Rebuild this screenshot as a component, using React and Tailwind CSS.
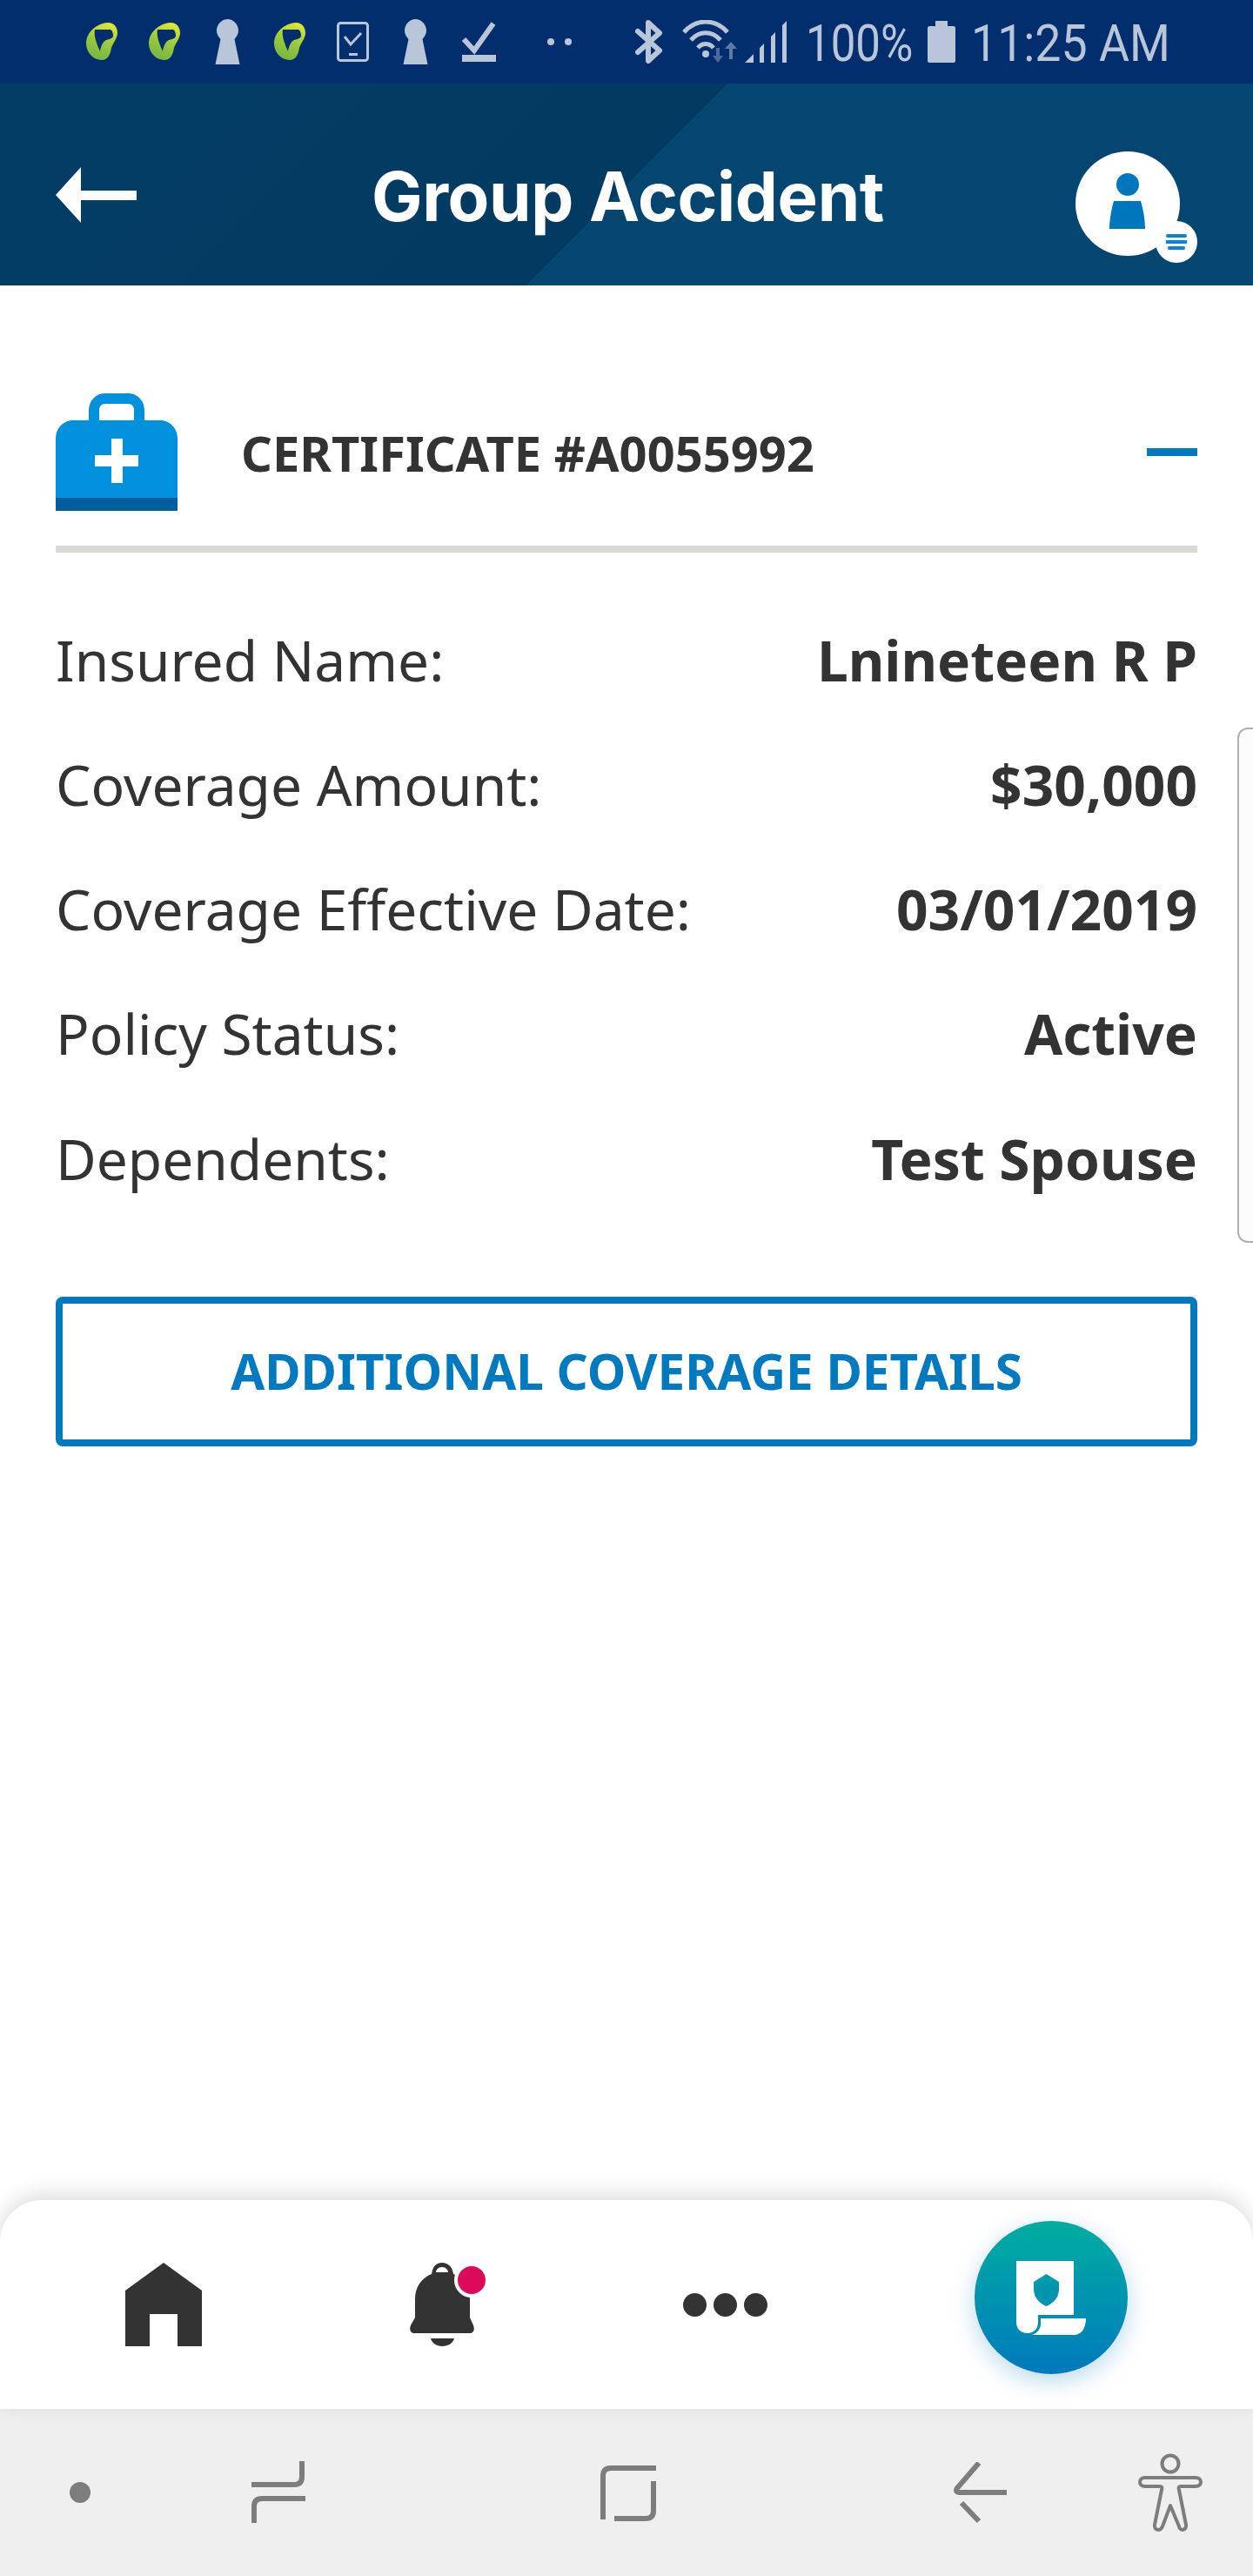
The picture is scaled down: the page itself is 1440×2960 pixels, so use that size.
import React from "react";

const statusText = "text-[#b9c5d8] font-['Roboto',sans-serif] font-normal text-[60px] leading-none origin-left translate-y-[2px]";

function Blob({ id }) {
  return (
    <svg width="36" height="44" viewBox="0 0 36 44" className="shrink-0">
      <defs>
        <linearGradient id={id} x1="0.7" y1="0" x2="0.4" y2="1">
          <stop offset="0" stopColor="#dfe635" />
          <stop offset="0.5" stopColor="#9ccb3b" />
          <stop offset="1" stopColor="#76b546" />
        </linearGradient>
      </defs>
      <path
        fillRule="evenodd"
        fill={"url(#" + id + ")"}
        d="M25 0C32 0 36 5 36 12C36 18 31 23 29 29C28 36 25 43 18 43C8 43 0 34 0 24C0 11 12 1 25 0ZM10 8C9 13 10 20 16 33C17 27 19 22 23 20C27 19 31 18 31 15C31 12 30 9 28 8Z"
      />
    </svg>
  );
}

function Keyhole() {
  return (
    <svg width="29" height="52" viewBox="0 0 29 52" className="shrink-0">
      <path fill="#b9c5d8" d="M14.500 0C21 0 27 6 27 13C27 18 24 21 22.500 23L28.500 52L0.500 52L6.500 23C5 21 2 18 2 13C2 6 8 0 14.500 0Z" />
    </svg>
  );
}

function StatusBar() {
  return (
    <div className="h-[96px] bg-[#032e6e] flex items-center shrink-0 pl-[99px]">
      <Blob id="blobA" />
      <div className="ml-[36px]"><Blob id="blobB" /></div>
      <div className="ml-[40px]"><Keyhole /></div>
      <div className="ml-[39px]"><Blob id="blobC" /></div>
      <svg width="37" height="46" viewBox="0 0 37 46" className="ml-[36px] shrink-0">
        <rect x="1.500" y="1.500" width="34" height="43" rx="3" fill="none" stroke="#b9c5d8" strokeWidth="3" />
        <path d="M9 17L16 26L28 13" fill="none" stroke="#b9c5d8" strokeWidth="3" />
        <rect x="14" y="36" width="10" height="3" fill="#b9c5d8" />
      </svg>
      <div className="ml-[39px]"><Keyhole /></div>
      <svg width="39" height="46" viewBox="0 0 39 46" className="ml-[39px] shrink-0">
        <path d="M2 20L14 33L36 2" fill="none" stroke="#b9c5d8" strokeWidth="6" />
        <rect x="0" y="38" width="39" height="8" fill="#b9c5d8" />
      </svg>
      <div className="ml-[59px] flex gap-[12px] shrink-0">
        <div className="w-[8px] h-[8px] rounded-full bg-[#b9c5d8]" />
        <div className="w-[8px] h-[8px] rounded-full bg-[#b9c5d8]" />
      </div>
      <svg width="32" height="50" viewBox="0 0 32 50" className="ml-[73px] shrink-0">
        <path d="M3 13L28 35L15 47V3L28 15L3 37" fill="none" stroke="#b9c5d8" strokeWidth="6" strokeLinejoin="round" strokeLinecap="round" />
      </svg>
      <svg width="66" height="50" viewBox="0 0 66 50" className="ml-[21px] shrink-0">
        <path d="M3 14C17 -2 39 -2 53 14" fill="none" stroke="#b9c5d8" strokeWidth="5" />
        <path d="M11 23C21 12 35 12 45 23" fill="none" stroke="#b9c5d8" strokeWidth="5" />
        <path d="M19 32C24 26 32 26 37 32" fill="none" stroke="#b9c5d8" strokeWidth="5" />
        <circle cx="28" cy="39" r="4" fill="#b9c5d8" />
        <path d="M42 32V44" fill="none" stroke="#4d6a9c" strokeWidth="4" />
        <path d="M36 41H48L42 49Z" fill="#4d6a9c" />
        <path d="M57 45V30" fill="none" stroke="#5f7aa6" strokeWidth="4" />
        <path d="M50 33H64L57 25Z" fill="#5f7aa6" />
      </svg>
      <svg width="48" height="48" viewBox="0 0 48 48" className="ml-[7px] shrink-0">
        <path fill="#b9c5d8" d="M0 48L10 38V48ZM17 31L22 26V48H17ZM30 18L35 13V48H30ZM43 5L48 0V48H43Z" />
      </svg>
      <div className="ml-[22px] w-[122px] shrink-0">
        <span className={statusText + " inline-block scale-x-[0.85] whitespace-nowrap"}>100%</span>
      </div>
      <svg width="32" height="48" viewBox="0 0 32 48" className="ml-[18px] shrink-0">
        <path fill="#b9c5d8" d="M9 0H23V6H30C31 6 32 7 32 8V46C32 47 31 48 30 48H2C1 48 0 47 0 46V8C0 7 1 6 2 6H9Z" />
      </svg>
      <div className="ml-[18px] w-[223px] shrink-0">
        <span className={statusText + " inline-block scale-x-[0.895] whitespace-nowrap"}>11:25 AM</span>
      </div>
    </div>
  );
}

function Header() {
  return (
    <div className="h-[232px] shrink-0 flex items-center pt-[24px] pl-[64px] bg-[linear-gradient(135deg,#033d66_0%,#033a61_50%,#04466f_50%,#04466f_100%)]">
      <svg width="93" height="64" viewBox="0 0 93 64" className="shrink-0">
        <path fill="#fff" d="M29 0V27H93V38H29V64L0 32Z" />
      </svg>
      <div className="ml-[270px] mt-[4px] text-white font-['Inter',sans-serif] font-bold text-[78px] tracking-[-0.400px] leading-none whitespace-nowrap">
        Group Accident
      </div>
      <div className="relative ml-auto mr-[84px] self-end mb-[34px] w-[120px] h-[120px] rounded-full bg-white shrink-0 flex flex-col items-center pt-[25px]">
        <div className="w-[26px] h-[26px] rounded-full bg-[#0076bd]" />
        <svg width="42" height="32" viewBox="0 0 42 32" className="mt-[6px]">
          <path fill="#0076bd" d="M5 0H36C39 10 41 22 41 32H0C0 22 2 10 5 0Z" />
        </svg>
        <div className="absolute left-[92px] top-[80px] w-[48px] h-[48px] rounded-full bg-white flex flex-col items-center justify-center gap-[3px]">
          <div className="w-[24px] h-[4px] bg-[#0a84cc] rounded-[2px]" />
          <div className="w-[24px] h-[4px] bg-[#0a84cc]" />
          <div className="w-[20px] h-[4px] bg-[#0a84cc] rounded-[2px]" />
        </div>
      </div>
    </div>
  );
}

function Row({ label, value }) {
  return (
    <div className="h-[143.250px] flex items-center justify-between font-['Noto_Sans',sans-serif] text-[#333333] text-[64px] leading-none">
      <span>{label}</span>
      <span className="font-bold">{value}</span>
    </div>
  );
}

function Certificate() {
  return (
    <div className="flex-1 px-[64px]">
      <div className="flex items-center pt-[124px] pb-[40px] border-b-[8px] border-[#d8d8d4]">
        <svg width="140" height="135" viewBox="0 0 140 135" className="shrink-0">
          <path fill="none" stroke="#0090dc" strokeWidth="12" d="M44 36V20C44 11 50 6 57 6H83C90 6 96 11 96 20V36" />
          <path fill="#0090dc" d="M20 31H120C132 31 140 41 140 52V120H0V52C0 41 8 31 20 31Z" />
          <path fill="#005e9f" d="M0 120H140V135H0Z" />
          <path fill="#fff" d="M64 52H77V71H95V84H77V103H64V84H45V71H64Z" />
        </svg>
        <div className="ml-[73px] flex-1 font-['Noto_Sans',sans-serif] font-bold text-[#333333] text-[56px] leading-none whitespace-nowrap">
          CERTIFICATE #A0055992
        </div>
        <div className="w-[58px] h-[9px] bg-[#0078be] shrink-0" />
      </div>
      <div className="mt-[52px]">
        <Row label="Insured Name:" value="Lnineteen R P" />
        <Row label="Coverage Amount:" value="$30,000" />
        <Row label="Coverage Effective Date:" value="03/01/2019" />
        <Row label="Policy Status:" value="Active" />
        <Row label="Dependents:" value="Test Spouse" />
      </div>
      <button
        type="button"
        className="mt-[87px] w-full h-[172px] border-[8px] border-[#0079bf] rounded-[8px] bg-white text-[#0079bf] font-['Noto_Sans',sans-serif] font-bold text-[56.500px] leading-none"
      >
        ADDITIONAL COVERAGE DETAILS
      </button>
    </div>
  );
}

function BottomTabs() {
  return (
    <div className="relative h-[240px] shrink-0 rounded-t-[48px] bg-white shadow-[0_-6px_24px_rgba(0,0,0,0.14)] flex items-center pl-[144px]">
      <svg width="88" height="96" viewBox="0 0 88 96" className="shrink-0">
        <path fill="#333333" d="M44 0L88 32V96H60V59H28V96H0V32Z" />
      </svg>
      <div className="relative ml-[239px] shrink-0 w-[74px] h-[96px]">
        <svg width="74" height="96" viewBox="0 0 74 96">
          <path
            fill="#333333"
            fillRule="evenodd"
            d="M37 0C44 0 49 5 50 13C62 17 69 28 69 42V63L73 72C75 77 73 81 69 81H5C1 81 -1 77 1 72L6 63V42C6 28 13 18 25 13C26 5 30 0 37 0ZM37 5C33 5 30 8 30 11H44C44 8 41 5 37 5Z"
          />
          <path fill="#333333" d="M24 87H51C50 92 44 96 37 96C31 96 25 92 24 87Z" />
        </svg>
        <div className="absolute left-[51px] top-0 w-[32px] h-[32px] rounded-full bg-[#dc0a5a] border-[4px] border-white box-content" />
      </div>
      <div className="ml-[240px] flex gap-[8px] shrink-0">
        <div className="w-[27px] h-[27px] rounded-full bg-[#333333]" />
        <div className="w-[27px] h-[27px] rounded-full bg-[#333333]" />
        <div className="w-[27px] h-[27px] rounded-full bg-[#333333]" />
      </div>
      <div className="ml-[238px] -mt-[16px] w-[176px] h-[176px] rounded-full shrink-0 bg-gradient-to-b from-[#04ad9f] to-[#0079bc] shadow-[0_8px_28px_rgba(0,121,188,0.28)] flex items-center justify-center">
        <svg width="80" height="85" viewBox="0 0 80 85">
          <path
            fill="#fff"
            fillRule="evenodd"
            d="M0 0H66V62H25V70C25 78 20 83 13 83C5 83 0 78 0 70ZM34.500 15L20 24V33C20 42 27 49 34.500 52C42 49 49 42 49 33V24Z"
          />
          <path fill="#fff" d="M28 66H80C80 77 75 85 66 85H18C24 83 28 78 28 72Z" />
        </svg>
      </div>
    </div>
  );
}

function SystemNav() {
  return (
    <div className="h-[192px] shrink-0 bg-[#efefef] flex items-center pl-[80px]">
      <div className="w-[24px] h-[24px] rounded-full bg-[#7d7d7d] shrink-0" />
      <svg width="62" height="72" viewBox="0 0 62 72" className="ml-[185px] shrink-0">
        <path fill="none" stroke="#7d7d7d" strokeWidth="6" d="M58 0V18C58 24 55 27 49 27H0" />
        <path fill="none" stroke="#7d7d7d" strokeWidth="6" d="M62 43H12C6 43 3 46 3 52V71" />
      </svg>
      <svg width="64" height="66" viewBox="0 0 64 66" className="ml-[339px] shrink-0">
        <path fill="none" stroke="#7d7d7d" strokeWidth="6" d="M3 64V14C3 8 6 5 12 5H64" />
        <path fill="none" stroke="#7d7d7d" strokeWidth="6" d="M61 20V54C61 60 58 63 52 63H16" />
      </svg>
      <svg width="62" height="70" viewBox="0 0 62 70" className="ml-[341px] shrink-0">
        <path fill="none" stroke="#7d7d7d" strokeWidth="6" d="M62 35H8C4 35 3 33 5 30L30 1" />
        <path fill="none" stroke="#7d7d7d" strokeWidth="6" d="M10 47L30 68" />
      </svg>
      <svg width="74" height="90" viewBox="0 0 74 90" className="ml-[151px] shrink-0">
        <circle cx="37" cy="12" r="9.500" fill="none" stroke="#7d7d7d" strokeWidth="4" />
        <path
          fill="none"
          stroke="#7d7d7d"
          strokeWidth="4"
          strokeLinejoin="round"
          d="M8 28H66C74 28 74 38 66 38H49C47 38 46 39 47 42L55 82C56 89 48 90 47 84L37 60L28 84C26 90 18 89 19 82L27 42C28 39 27 38 25 38H8C0 38 0 28 8 28Z"
        />
      </svg>
    </div>
  );
}

export default function App() {
  return (
    <div className="relative w-[1440px] h-[2960px] bg-white flex flex-col overflow-hidden">
      <StatusBar />
      <Header />
      <Certificate />
      <BottomTabs />
      <SystemNav />
      {/* edge panel handle sits over the page */}
      <div className="absolute right-0 top-[836px] w-[18px] h-[592px] bg-[#fcfcfc] border-l-2 border-y-2 border-[#b0b0b0] rounded-l-[12px]" />
    </div>
  );
}
